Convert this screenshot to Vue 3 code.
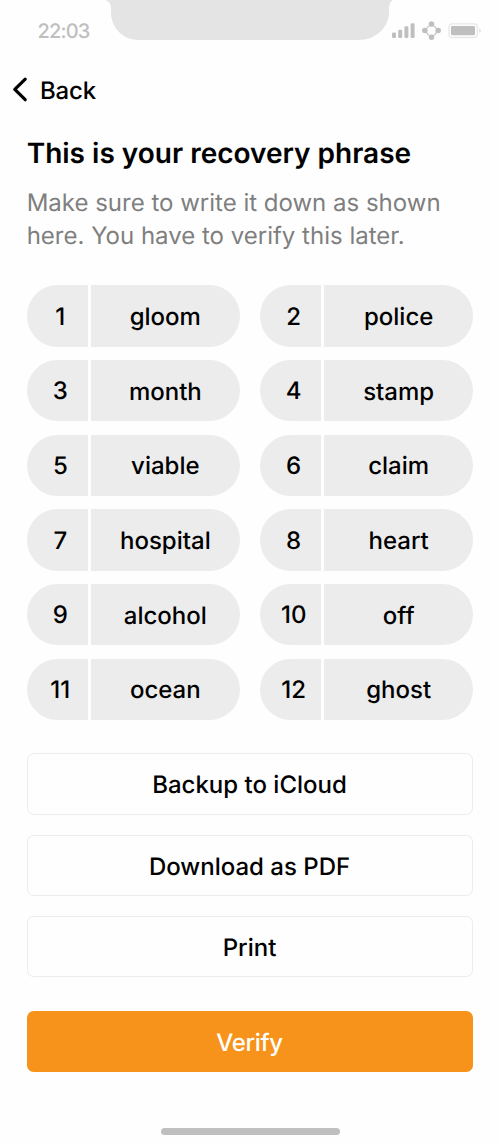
<script setup>
const words = [
  'gloom', 'police', 'month', 'stamp', 'viable', 'claim',
  'hospital', 'heart', 'alcohol', 'off', 'ocean', 'ghost',
]
const actions = ['Backup to iCloud', 'Download as PDF', 'Print']
</script>

<template>
  <main class="screen">
    <header class="status">
      <span class="time">22:03</span>
      <svg class="notch" width="288" height="40" viewBox="0 0 288 40" aria-hidden="true">
        <path d="M0 0C4 1 6 4 6 9V12C6 28 18 40 34 40H254C270 40 284 28 284 12V9C284 4 286 1 288 0Z" fill="#e4e4e4" />
      </svg>
      <svg class="indicators" width="92" height="24" viewBox="0 0 92 24" aria-hidden="true">
        <g fill="#bfbfbf">
          <rect x="2" y="14.5" width="4" height="5.5" rx="1.3" />
          <rect x="8.2" y="11.7" width="4" height="8.3" rx="1.3" />
          <rect x="14.4" y="8.3" width="4" height="11.7" rx="1.3" />
          <rect x="20.6" y="5.3" width="4" height="14.7" rx="1.3" />
          <circle cx="41.5" cy="5.9" r="2.75" />
          <circle cx="34.8" cy="12.6" r="2.75" />
          <circle cx="48.2" cy="12.6" r="2.75" />
          <circle cx="41.5" cy="19.3" r="2.75" />
          <rect x="61" y="8" width="24" height="9.3" rx="1.3" />
        </g>
        <circle cx="41.5" cy="12.6" r="5.2" fill="none" stroke="#bfbfbf" stroke-width="1.1" />
        <rect x="59" y="5.8" width="28.3" height="13.7" rx="3.2" fill="none" stroke="#e8e8e8" stroke-width="1.3" />
        <path d="M89 10.3C91.6 11.3 91.6 13.9 89 14.9Z" fill="#e4e4e4" />
      </svg>
    </header>

    <nav class="back">
      <svg width="16" height="28" viewBox="0 0 16 28" aria-hidden="true">
        <path d="M13.2 3.2L2.8 13.4L13.2 23.7" fill="none" stroke="#000" stroke-width="3.2" stroke-linecap="round" stroke-linejoin="round" />
      </svg>
      <span>Back</span>
    </nav>

    <h1>This is your recovery phrase</h1>
    <p class="lead">Make sure to write it down as shown<br>here. You have to verify this later.</p>

    <ol class="phrase">
      <li v-for="(word, i) in words" :key="word">
        <span class="num">{{ i + 1 }}</span>
        <span class="word">{{ word }}</span>
      </li>
    </ol>

    <div class="actions">
      <button v-for="label in actions" :key="label" class="btn">{{ label }}</button>
    </div>
    <button class="btn primary">Verify</button>
    <div class="home-bar"></div>
  </main>
</template>

<style>
body { margin: 0; background: #fefefe; }
</style>

<style scoped>
.screen {
  display: flex;
  flex-direction: column;
  box-sizing: border-box;
  width: 500px;
  height: 1145px;
  padding: 0 26.67px;
  overflow: hidden;
  background: #fefefe;
  color: #000;
  font-family: Inter, "Liberation Sans", sans-serif;
  font-size: 24px;
  text-rendering: geometricPrecision;
}
.status {
  display: flex;
  flex: none;
  height: 72px;
  margin: 0 -26.67px;
}
.time {
  width: 67.5px;
  padding: 19px 0 0 37.5px;
  color: #bfbfbf;
  font-size: 20px;
  font-weight: 500;
  letter-spacing: -0.85px;
  line-height: 24px;
}
.notch { flex: none; }
.indicators { flex: none; margin: 18px 0 0 -3px; }
.back {
  display: flex;
  flex: none;
  align-items: center;
  height: 36px;
  margin-left: -14.67px;
  font-weight: 500;
  letter-spacing: -0.15px;
}
.back svg { margin-right: 12px; }
h1 {
  flex: none;
  margin: 28px 0 0;
  font-size: 28px;
  font-weight: 600;
  line-height: 34px;
  white-space: nowrap;
}
.lead {
  flex: none;
  margin: 15.5px 0 0;
  color: #7f7f7f;
  line-height: 33.33px;
  white-space: nowrap;
}
.phrase {
  display: grid;
  flex: none;
  grid-template-columns: 1fr 1fr;
  gap: 13.33px 20px;
  margin: 33.3px 0 0;
  padding: 0;
  list-style: none;
  font-weight: 500;
}
.phrase li {
  display: grid;
  grid-template-columns: 61.33px 1fr;
  gap: 2.67px;
  height: 61.33px;
  line-height: 61.33px;
  text-align: center;
}
.num,
.word {
  box-sizing: border-box;
  height: 61.33px;
  background: #ececec;
}
.num {
  padding: 0.3px 0 0 6px;
  border-radius: 30.67px 0 0 30.67px;
}
.word {
  padding-top: 0.6px;
  border-radius: 0 30.67px 30.67px 0;
}
.actions {
  display: flex;
  flex: none;
  flex-direction: column;
  gap: 20px;
  margin: 33.33px 0;
}
.btn {
  box-sizing: border-box;
  flex: none;
  width: 100%;
  height: 61.33px;
  padding: 1.4px 1px 0 0;
  border: 1.33px solid #ececec;
  border-radius: 6.67px;
  background: #fefefe;
  color: #000;
  font: 500 24px Inter, "Liberation Sans", sans-serif;
  text-rendering: geometricPrecision;
}
.primary {
  border: 0;
  background: #f7931a;
  color: #fff;
  letter-spacing: -0.3px;
}
.home-bar {
  flex: none;
  align-self: center;
  width: 178.67px;
  height: 6.67px;
  margin: 56px 0 0 1px;
  border-radius: 4px;
  background: #bfbfbf;
}
</style>
